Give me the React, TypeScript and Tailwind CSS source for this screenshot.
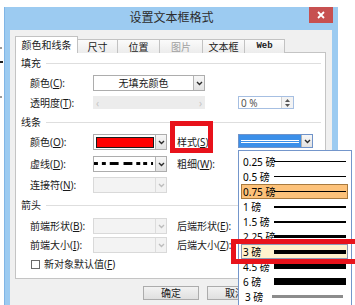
import React from "react";

// mnemonic label, e.g. 颜色(C):
function Mn({ t, k }: { t: string; k: string }) {
  return (
    <span className="whitespace-nowrap">
      {t}(<span className="underline underline-offset-1">{k}</span>):
    </span>
  );
}

function Chevron({ dim }: { dim?: boolean }) {
  return (
    <svg width="7" height="5" viewBox="0 0 7 5">
      <path d="M1 1l2.5 2.5L6 1" fill="none" stroke={dim ? "#bdbdbd" : "#2b2b2b"} strokeWidth="1.4" />
    </svg>
  );
}

function DropBtn({ dim }: { dim?: boolean }) {
  return (
    <div
      className={
        dim
          ? "w-[11px] h-full flex items-center justify-center border-l border-[#dcdcdc] bg-[#f2f2f2]"
          : "w-[11px] h-full flex items-center justify-center border-l border-[#b3b3b3] bg-linear-to-b from-[#f7f7f7] to-[#e2e2e2]"
      }
    >
      <Chevron dim={dim} />
    </div>
  );
}

function Disabled() {
  return (
    <div className="w-[74px] h-full border border-[#d9d9d9] bg-[#f3f3f3] flex">
      <div className="flex-1" />
      <DropBtn dim />
    </div>
  );
}

function Group({ title, cls }: { title: string; cls: string }) {
  return (
    <div className={`flex items-center h-[14px] pl-[5px] pr-[4px] ${cls}`}>
      <span>{title}</span>
      <div className="ml-[5px] flex-1 h-px bg-[#dedede]" />
    </div>
  );
}

const weights = [
  { t: "0.25 磅", h: 1, sel: "" },
  { t: "0.5 磅", h: 1, sel: "" },
  { t: "0.75 磅", h: 1, sel: "orange" },
  { t: "1 磅", h: 2, sel: "" },
  { t: "1.5 磅", h: 2, sel: "" },
  { t: "2.25 磅", h: 3, sel: "" },
  { t: "3 磅", h: 4, sel: "hover" },
  { t: "4.5 磅", h: 5, sel: "" },
  { t: "6 磅", h: 7, sel: "" },
];

function Tab({ label, w, dim, mono }: { label: string; w: string; dim?: boolean; mono?: boolean }) {
  return (
    <div
      className={`${w} h-[14px] flex items-center justify-center border-t border-r border-[#c2c2c2] bg-linear-to-b from-[#fbfbfb] to-[#ececec] ${
        dim ? "text-[#a0a0a0]" : ""
      } ${mono ? "font-['Liberation_Mono',monospace] font-bold text-[9px]" : ""}`}
    >
      {label}
    </div>
  );
}

export default function App() {
  return (
    <div className="relative w-[355px] h-[305px] overflow-hidden bg-white text-[10px] leading-none text-[#1a1a1a] font-['Noto_Sans','Noto_Sans_CJK_SC',sans-serif]">
      {/* bits of the desktop behind the window */}
      <div className="absolute left-0 top-[47px] w-[2px] h-[2px] bg-[#9a9a9a]" />
      <div className="absolute left-0 top-[61px] w-[3px] h-[2px] bg-[#1e1e1e]" />
      <div className="absolute left-0 top-[96px] w-[2px] h-[2px] bg-[#9a9a9a]" />

      <div className="ml-[4px] mt-[7px] w-[334px] h-[300px] bg-[#9ccbf1] border-l border-[#80b5e5] flex flex-col">
        {/* title bar */}
        <div className="relative h-[23px] flex items-center justify-center">
          <span className="text-[12px] text-[#2c2c2c] pb-[1px]">设置文本框格式</span>
          <div className="absolute right-[5px] top-0 w-[24px] h-[16px] bg-[#c75050] flex items-center justify-center">
            <svg width="8" height="8" viewBox="0 0 8 8">
              <path d="M1 1l6 6M7 1L1 7" stroke="#fff" strokeWidth="1.8" />
            </svg>
          </div>
        </div>

        {/* client area */}
        <div className="ml-[5px] w-[322px] flex-1 bg-[#f0f0f0] pt-[6px]">
          <div className="ml-[5px] flex items-end h-[17px]">
            <div className="relative z-10 w-[63px] h-[17px] bg-white border-l border-t border-r border-[#c2c2c2] flex items-center justify-center pb-[1px]">
              颜色和线条
            </div>
            <Tab label="尺寸" w="w-[40px]" />
            <Tab label="位置" w="w-[42px]" />
            <Tab label="图片" w="w-[43px]" dim />
            <Tab label="文本框" w="w-[42px]" />
            <Tab label="Web" w="w-[40px]" mono />
          </div>

          {/* tab page */}
          <div className="ml-[5px] -mt-px w-[311px] h-[227px] border border-[#c4c4c4] bg-white flex flex-col">
            <Group title="填充" cls="mt-[3px]" />

            <div className="mt-[5px] h-[16px] flex items-center pl-[14px]">
              <div className="w-[63px]">
                <Mn t="颜色" k="C" />
              </div>
              <div className="w-[112px] h-full border border-[#adadad] bg-white flex">
                <div className="flex-1 flex items-center justify-center">无填充颜色</div>
                <DropBtn />
              </div>
            </div>

            <div className="mt-[5px] h-[13px] flex items-center pl-[14px]">
              <div className="w-[63px]">
                <Mn t="透明度" k="T" />
              </div>
              <div className="w-[112px] h-full bg-[#ececec] flex items-center justify-between px-[3px] text-[#c4c4c4]">
                <span>‹</span>
                <span>›</span>
              </div>
              <div className="ml-[33px] w-[56px] h-[13px] border border-[#a6bfe2] bg-white flex">
                <div className="flex-1 flex items-center pl-[2px] text-[#555]">0 %</div>
                <div className="w-[12px] h-full border-l border-[#d0d0d0] bg-[#f3f3f3] flex flex-col items-center justify-center gap-[2px]">
                  <svg width="5" height="3" viewBox="0 0 5 3">
                    <path d="M0 3L2.5 0L5 3z" fill="#555" />
                  </svg>
                  <svg width="5" height="3" viewBox="0 0 5 3">
                    <path d="M0 0L2.5 3L5 0z" fill="#555" />
                  </svg>
                </div>
              </div>
            </div>

            <Group title="线条" cls="mt-[6px]" />

            <div className="mt-[5px] h-[16px] flex items-center pl-[14px]">
              <div className="w-[63px]">
                <Mn t="颜色" k="O" />
              </div>
              <div className="w-[74px] h-full border border-[#adadad] bg-white flex items-center">
                <div className="ml-[2px] w-[58px] h-[11px] bg-[#ff0000] border border-[#1a1a1a]" />
                <div className="ml-auto h-full">
                  <DropBtn />
                </div>
              </div>
              <div className="ml-[10px] w-[61px]">
                <Mn t="样式" k="S" />
              </div>
              <div className="self-start w-[75px] h-[14px] border border-[#6f93c9] flex">
                <div className="flex-1 bg-[#3b8fe9] flex flex-col justify-center gap-[1px] px-[2px]">
                  <div className="h-px bg-white" />
                  <div className="h-px bg-white" />
                </div>
                <DropBtn />
              </div>
            </div>

            <div className="mt-[6px] h-[16px] flex items-center pl-[14px]">
              <div className="w-[63px]">
                <Mn t="虚线" k="D" />
              </div>
              <div className="w-[74px] h-full border border-[#adadad] bg-white flex items-center">
                <svg width="62" height="14" viewBox="0 0 62 14">
                  <g fill="#000">
                    <rect x="0" y="5" width="4" height="3" />
                    <rect x="8" y="5" width="4" height="3" />
                    <rect x="16" y="5" width="9" height="3" />
                    <rect x="30" y="5" width="9" height="3" />
                    <rect x="43" y="5" width="4" height="3" />
                    <rect x="50" y="5" width="4" height="3" />
                    <rect x="58" y="5" width="2" height="3" />
                  </g>
                </svg>
                <div className="ml-auto h-full">
                  <DropBtn />
                </div>
              </div>
              <div className="ml-[10px] w-[61px]">
                <Mn t="粗细" k="W" />
              </div>
            </div>

            <div className="mt-[5px] h-[16px] flex items-center pl-[14px]">
              <div className="w-[63px]">
                <Mn t="连接符" k="N" />
              </div>
              <Disabled />
            </div>

            <Group title="箭头" cls="mt-[5px]" />

            <div className="mt-[6px] h-[16px] flex items-center pl-[14px]">
              <div className="w-[63px]">
                <Mn t="前端形状" k="B" />
              </div>
              <Disabled />
              <div className="ml-[10px] w-[61px]">
                <Mn t="后端形状" k="E" />
              </div>
            </div>

            <div className="mt-[3px] h-[16px] flex items-center pl-[14px]">
              <div className="w-[63px]">
                <Mn t="前端大小" k="I" />
              </div>
              <Disabled />
              <div className="ml-[10px] w-[61px]">
                <Mn t="后端大小" k="Z" />
              </div>
            </div>

            <div className="mt-[4px] h-[14px] flex items-center pl-[15px]">
              <div className="w-[9px] h-[9px] border border-[#6b6b6b] bg-white" />
              <span className="ml-[4px]">
                新对象默认值(<span className="underline underline-offset-1">F</span>)
              </span>
            </div>
          </div>

          {/* buttons */}
          <div className="mt-[7px] ml-[133px] flex gap-[8px]">
            <div className="w-[56px] h-[14px] border border-[#acacac] bg-linear-to-b from-[#f2f2f2] to-[#e0e0e0] flex items-center justify-center">
              确定
            </div>
            <div className="w-[56px] h-[14px] border border-[#acacac] bg-linear-to-b from-[#f2f2f2] to-[#e0e0e0] flex items-center justify-center">
              取消
            </div>
          </div>
        </div>
      </div>

      {/* open line-weight list */}
      <div className="absolute left-[238px] top-[150px] w-[114px] h-[170px] border border-[#7496cb] bg-white pt-[3px] text-black">
        {weights.map((it) => (
          <div
            key={it.t}
            className={`ml-[2px] mr-[3px] h-[15px] flex items-center pl-[1px] border ${
              it.sel === "orange"
                ? "border-[#a87a3e] bg-[#fdc27a]"
                : it.sel === "hover"
                ? "border-[#8e99b4] bg-[#fff2cd]"
                : "border-transparent"
            }`}
          >
            <span className="w-[31px] whitespace-nowrap">{it.t}</span>
            <div className="w-[72px] bg-black" style={{ height: it.h }} />
          </div>
        ))}
        <div className="ml-[2px] h-[15px] flex items-center pl-[4px]">
          <span className="w-[27px] whitespace-nowrap">3 磅</span>
          <div className="w-[71px] h-[3px] bg-[#8c8c8c]" />
        </div>
        <div className="ml-[36px] mt-[2px] flex gap-[1px]">
          <div className="w-[7px] h-[7px] rounded-full border border-[#9a9a9a]" />
          <div className="w-[7px] h-[7px] rounded-full border border-[#9a9a9a]" />
        </div>
      </div>

      {/* red call-outs */}
      <div className="absolute left-[170px] top-[121px] w-[43px] h-[32px] border-[5px] border-[#e8121b]" />
      <div className="absolute left-[231px] top-[239px] w-[130px] h-[25px] border-[5px] border-[#e8121b]" />
    </div>
  );
}
